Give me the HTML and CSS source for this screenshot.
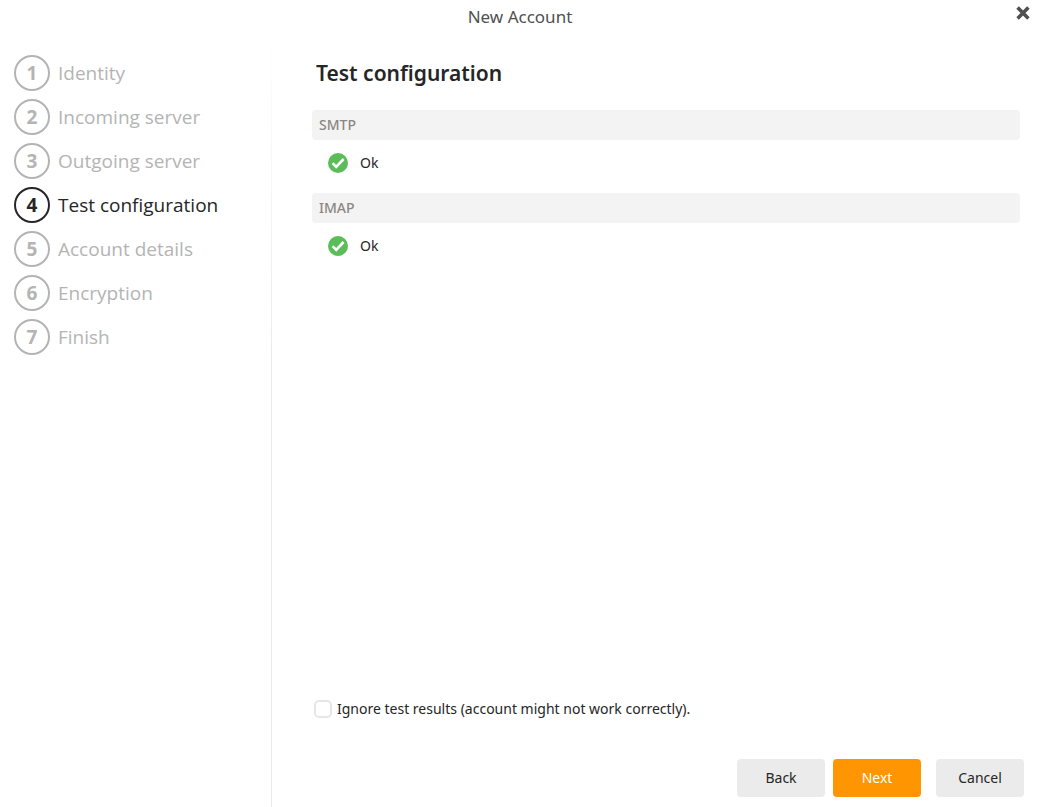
FILE: index.html
```html
<!DOCTYPE html>
<html lang="en">
<head>
<meta charset="utf-8">
<title>New Account</title>
<link rel="stylesheet" href="styles.css">
</head>
<body>
<div class="dialog">
  <header class="titlebar">
    <h1 class="title">New Account</h1>
    <button class="close" type="button" aria-label="Close">
      <svg width="14" height="14" viewBox="0 0 14 14" aria-hidden="true"><path d="M1.6 1.6L12.4 12.4M12.4 1.6L1.6 12.4" stroke="#505050" stroke-width="3.6" fill="none"/></svg>
    </button>
  </header>
  <div class="body">
    <nav class="sidebar" aria-label="Steps">
      <ol class="steps">
        <li class="step"><span class="number">1</span><span>Identity</span></li>
        <li class="step"><span class="number">2</span><span>Incoming server</span></li>
        <li class="step"><span class="number">3</span><span>Outgoing server</span></li>
        <li class="step current" aria-current="step"><span class="number">4</span><span>Test configuration</span></li>
        <li class="step"><span class="number">5</span><span>Account details</span></li>
        <li class="step"><span class="number">6</span><span>Encryption</span></li>
        <li class="step"><span class="number">7</span><span>Finish</span></li>
      </ol>
    </nav>
    <main class="content">
      <h2 class="heading">Test configuration</h2>
      <section class="test">
        <h3 class="protocol">SMTP</h3>
        <p class="result">
          <svg width="20" height="20" viewBox="0 0 20 20" aria-hidden="true"><circle cx="10" cy="10" r="10" fill="#5bbd5a"/><path d="M4.6 10.2L8.2 13.8L15.6 6" stroke="#fff" stroke-width="2.6" fill="none"/></svg>
          <span>Ok</span>
        </p>
      </section>
      <section class="test">
        <h3 class="protocol">IMAP</h3>
        <p class="result">
          <svg width="20" height="20" viewBox="0 0 20 20" aria-hidden="true"><circle cx="10" cy="10" r="10" fill="#5bbd5a"/><path d="M4.6 10.2L8.2 13.8L15.6 6" stroke="#fff" stroke-width="2.6" fill="none"/></svg>
          <span>Ok</span>
        </p>
      </section>
      <label class="ignore" for="ignore"><input class="check" type="checkbox" id="ignore"><span>Ignore test results (account might not work correctly).</span></label>
      <footer class="actions">
        <button class="button" type="button">Back</button>
        <button class="button primary" type="button">Next</button>
        <button class="button cancel" type="button">Cancel</button>
      </footer>
    </main>
  </div>
</div>
</body>
</html>
```
FILE: styles.css
```css
* { box-sizing: border-box; }
body {
  margin: 0;
  background: #fff;
  color: #262626;
  font: 14px/20px "Noto Sans", "Open Sans", sans-serif;
}
h1, h2, h3, p, ol { margin: 0; padding: 0; font-weight: 400; }
.dialog { display: flex; flex-direction: column; min-height: 100vh; }
.titlebar {
  display: grid;
  grid-template-columns: 1fr auto 1fr;
  align-items: start;
  padding: 4px 8px 0 6px;
}
.title { grid-column: 2; font-size: 17px; line-height: 26px; color: #505050; }
.close {
  grid-column: 3;
  justify-self: end;
  display: flex;
  padding: 2px 4px;
  border: 0;
  background: none;
}
.body { flex: 1; display: flex; }
.sidebar {
  width: 272px;
  flex: none;
  padding: 25px 14px;
  border-right: 1px solid;
  border-image: linear-gradient(#fff, #ebebeb 320px) 1;
}
.steps { display: flex; flex-direction: column; gap: 8px; list-style: none; }
.step {
  display: flex;
  align-items: center;
  gap: 8px;
  color: #b4b4b4;
  font-family: "Open Sans", "Noto Sans", sans-serif;
  font-size: 19px;
  line-height: 28px;
}
.number {
  display: flex;
  align-items: center;
  justify-content: center;
  width: 36px;
  height: 36px;
  border: 2px solid;
  border-radius: 50%;
  font-weight: 700;
}
.current { color: #262626; }
.content {
  flex: 1;
  display: flex;
  flex-direction: column;
  padding: 28px 18px 10px 40px;
}
.heading { padding: 0 4px; margin-bottom: 22px; font-size: 21px; line-height: 30px; font-weight: 600; }
.test { margin-right: 4px; }
.protocol {
  padding: 5px 7px;
  border-radius: 4px;
  background: #f3f3f3;
  color: #8c8782;
  font-size: 14px;
  font-weight: 500;
}
.result { display: flex; align-items: center; gap: 12px; padding: 13px 16px 20px; }
.ignore { display: flex; align-items: center; gap: 5px; margin: auto auto 40px 2px; }
.check {
  appearance: none;
  width: 18px;
  height: 18px;
  margin: 0;
  border: 2px solid #e6e6e6;
  border-radius: 5px;
  background: #fff;
}
.check:checked { background: #ff9500; }
.actions { display: flex; justify-content: flex-end; gap: 8px; }
.button {
  width: 88px;
  height: 38px;
  padding: 0;
  border: 0;
  border-radius: 4px;
  background: #ebebeb;
  color: #262626;
  font: inherit;
}
.primary { background: #ff9500; color: #fff; }
.cancel { margin-left: 7px; }
```
